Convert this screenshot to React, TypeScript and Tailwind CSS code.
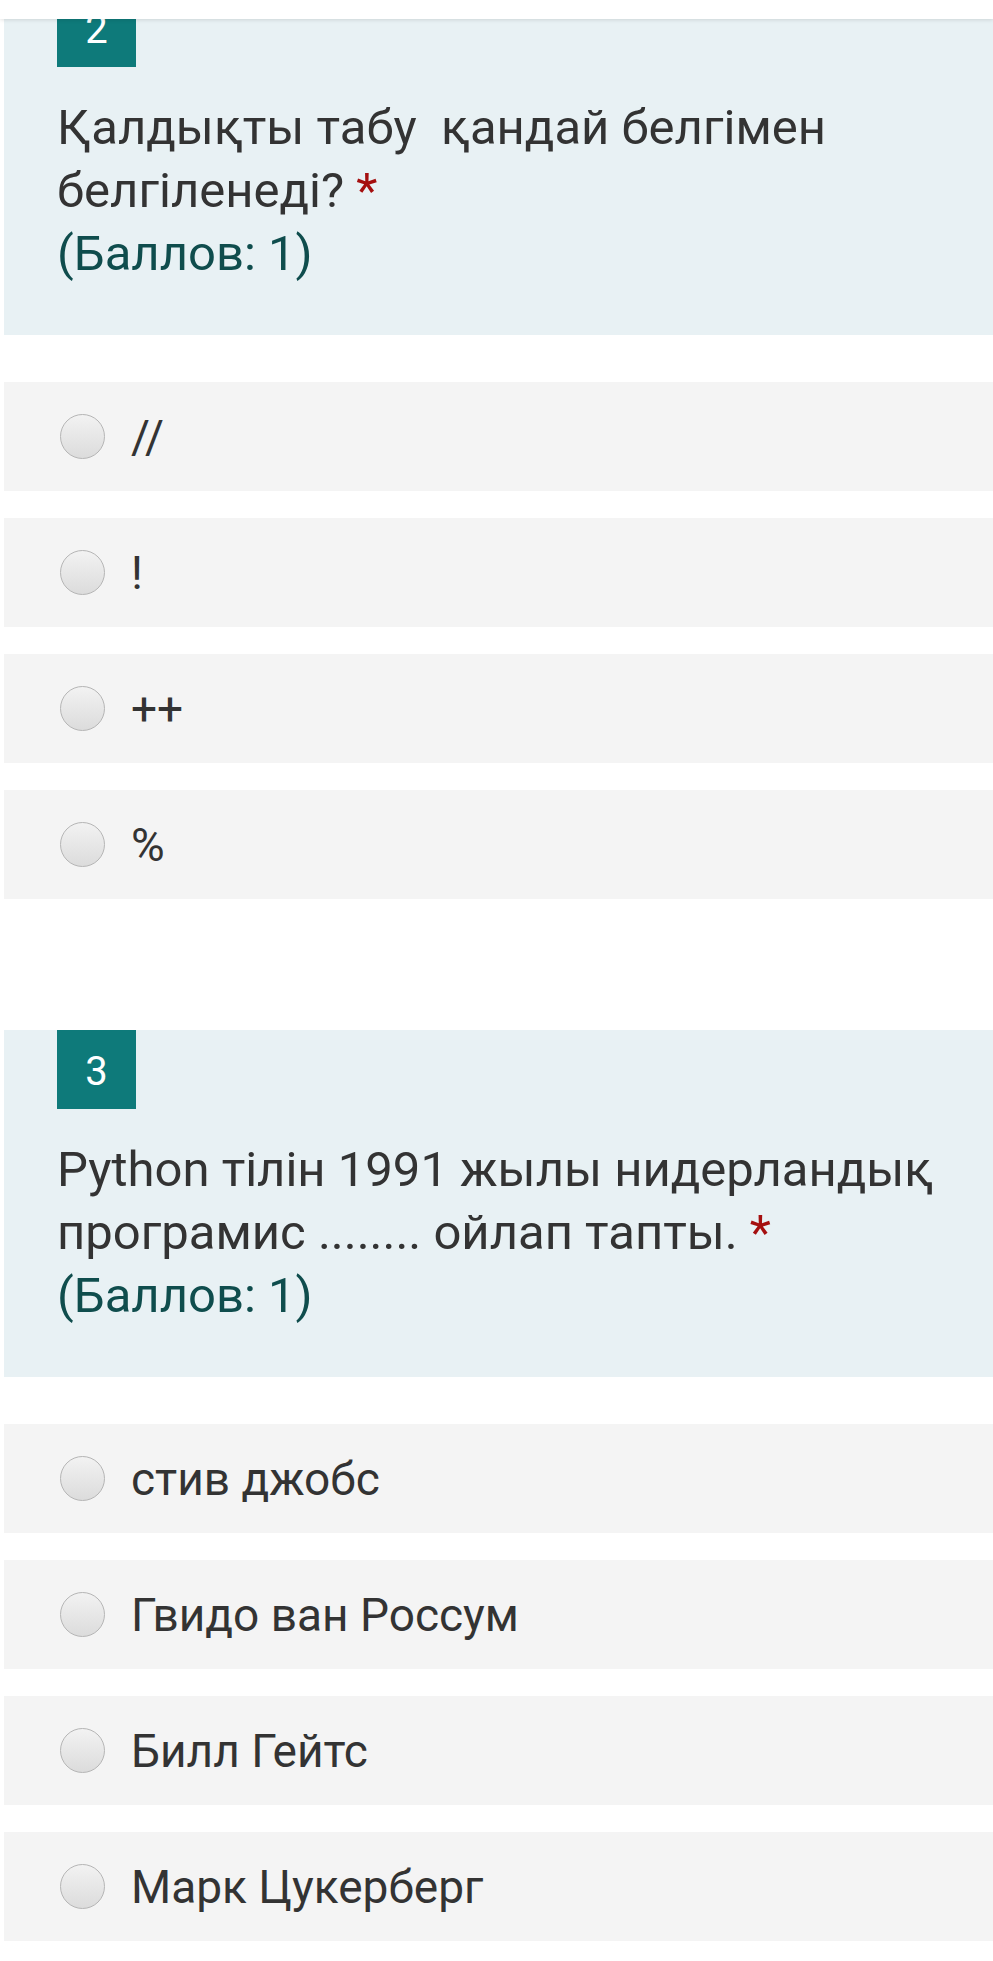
import React from 'react';

interface Question {
  num: number;
  lines: string[];
  options: string[];
}

const QUESTIONS: Question[] = [
  {
    num: 2,
    lines: ['Қалдықты табу  қандай белгімен', 'белгіленеді?'],
    options: ['//', '!', '++', '%'],
  },
  {
    num: 3,
    lines: ['Python тілін 1991 жылы нидерландық', 'програмис ........ ойлап тапты.'],
    options: ['стив джобс', 'Гвидо ван Россум', 'Билл Гейтс', 'Марк Цукерберг'],
  },
];

function Radio() {
  return (
    <span className="block w-[45px] h-[45px] rounded-full border border-[#b5b5b5] bg-gradient-to-b from-[#f2f2f2] to-[#dcdcdc] shrink-0" />
  );
}

function QuestionBlock({ q, first }: { q: Question; first: boolean }) {
  return (
    <div>
      {/* Header card */}
      <div className="bg-[#e8f1f4] overflow-hidden pb-[50px]">
        <div
          className={
            'ml-[53px] w-[79px] h-[79px] pt-[5px] bg-[#0e7a7a] text-white flex items-center justify-center text-[40px] ' +
            (first ? '-mt-[31px]' : '')
          }
        >
          {q.num}
        </div>
        <div className="pl-[53px] pr-8 mt-[29px] text-[49px] leading-[63px] text-[#333333]">
          {q.lines.map((line, i) => (
            <div key={i} className="whitespace-pre">
              {line}
              {i === q.lines.length - 1 && <span className="text-[#a50f0f]"> *</span>}
            </div>
          ))}
          <div className="text-[#0f4d4d]">(Баллов: 1)</div>
        </div>
      </div>

      {/* Options */}
      <div className="mt-[47px] flex flex-col gap-[27px]">
        {q.options.map((opt) => (
          <label key={opt} className="h-[109px] bg-[#f4f4f4] flex items-center pl-[56px] gap-[26px]">
            <Radio />
            <span className="text-[46px] text-[#333333] leading-none">{opt}</span>
          </label>
        ))}
      </div>
    </div>
  );
}

export default function App() {
  return (
    <div className="w-[993px] h-[1961px] bg-white overflow-hidden" style={{ fontFamily: 'Roboto, "Noto Sans", sans-serif' }}>
      <div className="relative z-10 h-[19px] bg-white shadow-[0_1px_4px_rgba(0,0,0,0.12)]" />
      <div className="pl-[4px] flex flex-col gap-[131px]">
        {QUESTIONS.map((q, i) => (
          <QuestionBlock key={q.num} q={q} first={i === 0} />
        ))}
      </div>
    </div>
  );
}
